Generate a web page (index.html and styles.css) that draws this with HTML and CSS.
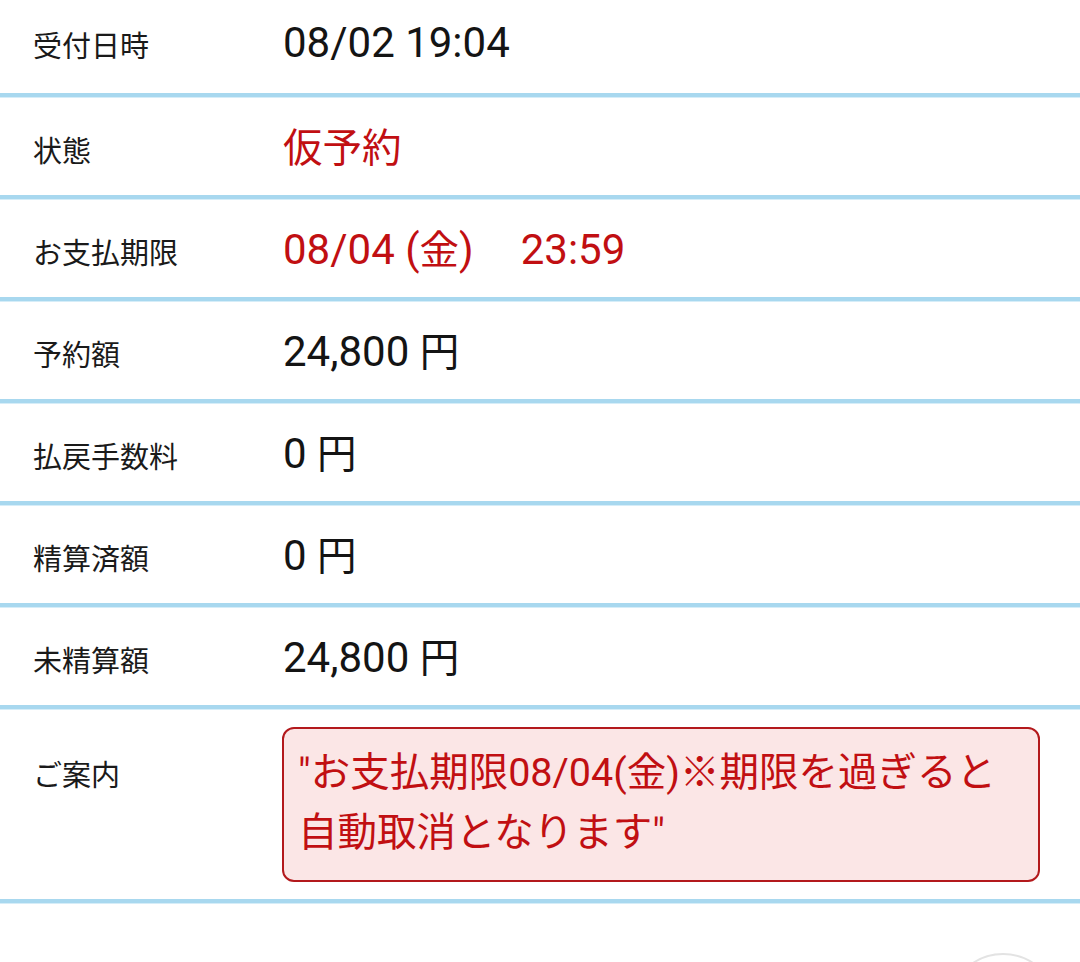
FILE: index.html
```html
<!DOCTYPE html>
<html lang="ja">
<head>
<meta charset="utf-8">
<title>予約詳細</title>
<link rel="stylesheet" href="styles.css">
</head>
<body>
<div class="screen">
  <div class="list">
    <div class="row">
      <div class="cells">
        <div class="label">受付日時</div>
        <div class="value">08/02 19:04</div>
      </div>
    </div>
    <div class="row">
      <div class="cells">
        <div class="label">状態</div>
        <div class="value red"><span class="cjk">仮予約</span></div>
      </div>
    </div>
    <div class="row">
      <div class="cells">
        <div class="label">お支払期限</div>
        <div class="value red">08/04 (<span class="cjk">金</span>)<span class="time">23:59</span></div>
      </div>
    </div>
    <div class="row">
      <div class="cells">
        <div class="label">予約額</div>
        <div class="value">24,800 <span class="cjk">円</span></div>
      </div>
    </div>
    <div class="row">
      <div class="cells">
        <div class="label">払戻手数料</div>
        <div class="value">0 <span class="cjk">円</span></div>
      </div>
    </div>
    <div class="row">
      <div class="cells">
        <div class="label">精算済額</div>
        <div class="value">0 <span class="cjk">円</span></div>
      </div>
    </div>
    <div class="row">
      <div class="cells">
        <div class="label">未精算額</div>
        <div class="value">24,800 <span class="cjk">円</span></div>
      </div>
    </div>
    <div class="row row-notice">
      <div class="label label-notice">ご案内</div>
      <div class="notice">"お支払期限08/04(金)※期限を過ぎると自動取消となります"</div>
    </div>
  </div>
  <div class="fab"></div>
</div>
</body>
</html>
```

FILE: styles.css
```css
html, body {
  margin: 0;
  padding: 0;
  background: #ffffff;
}

.screen {
  position: relative;
  width: 1080px;
  height: 962px;
  overflow: hidden;
  background: #ffffff;
  font-family: Roboto, "Noto Sans CJK JP", sans-serif;
}

.list {
  margin-top: -5px;
  display: flex;
  flex-direction: column;
}

.row {
  height: 98px;
  box-sizing: content-box;
  border-bottom: 4px solid #a8d8ef;
  box-shadow: 0 1px 0 #d6edf8;
  display: flex;
  align-items: center;
}

.cells {
  display: flex;
  align-items: baseline;
  width: 100%;
  margin-top: -3px;
}

.label {
  width: 283px;
  flex: none;
  box-sizing: border-box;
  padding-left: 33px;
  font-size: 29px;
  color: #1a1a1a;
  font-family: "Noto Sans CJK JP", sans-serif;
}

.value {
  font-size: 42px;
  color: #141414;
}

.cjk {
  font-size: 39.5px;
}

.red {
  color: #c10f12;
}

.time {
  margin-left: 47px;
}

.row-notice {
  height: auto;
  align-items: flex-start;
  padding: 18px 0 17px;
}

.label-notice {
  padding-top: 16px;
  line-height: 60px;
}

.notice {
  flex: 1;
  margin-left: -1px;
  margin-right: 40px;
  box-sizing: border-box;
  height: 155px;
  border: 2px solid #b3191c;
  border-radius: 12px;
  background: #fbe6e6;
  padding: 14px 14px 17px 14px;
  font-size: 39.5px;
  line-height: 60px;
  color: #c10f12;
}

.fab {
  position: absolute;
  left: 948px;
  top: 953px;
  width: 110px;
  height: 110px;
  box-sizing: border-box;
  border: 2px solid #e3e3e3;
  border-radius: 50%;
  background: #ffffff;
}
```
